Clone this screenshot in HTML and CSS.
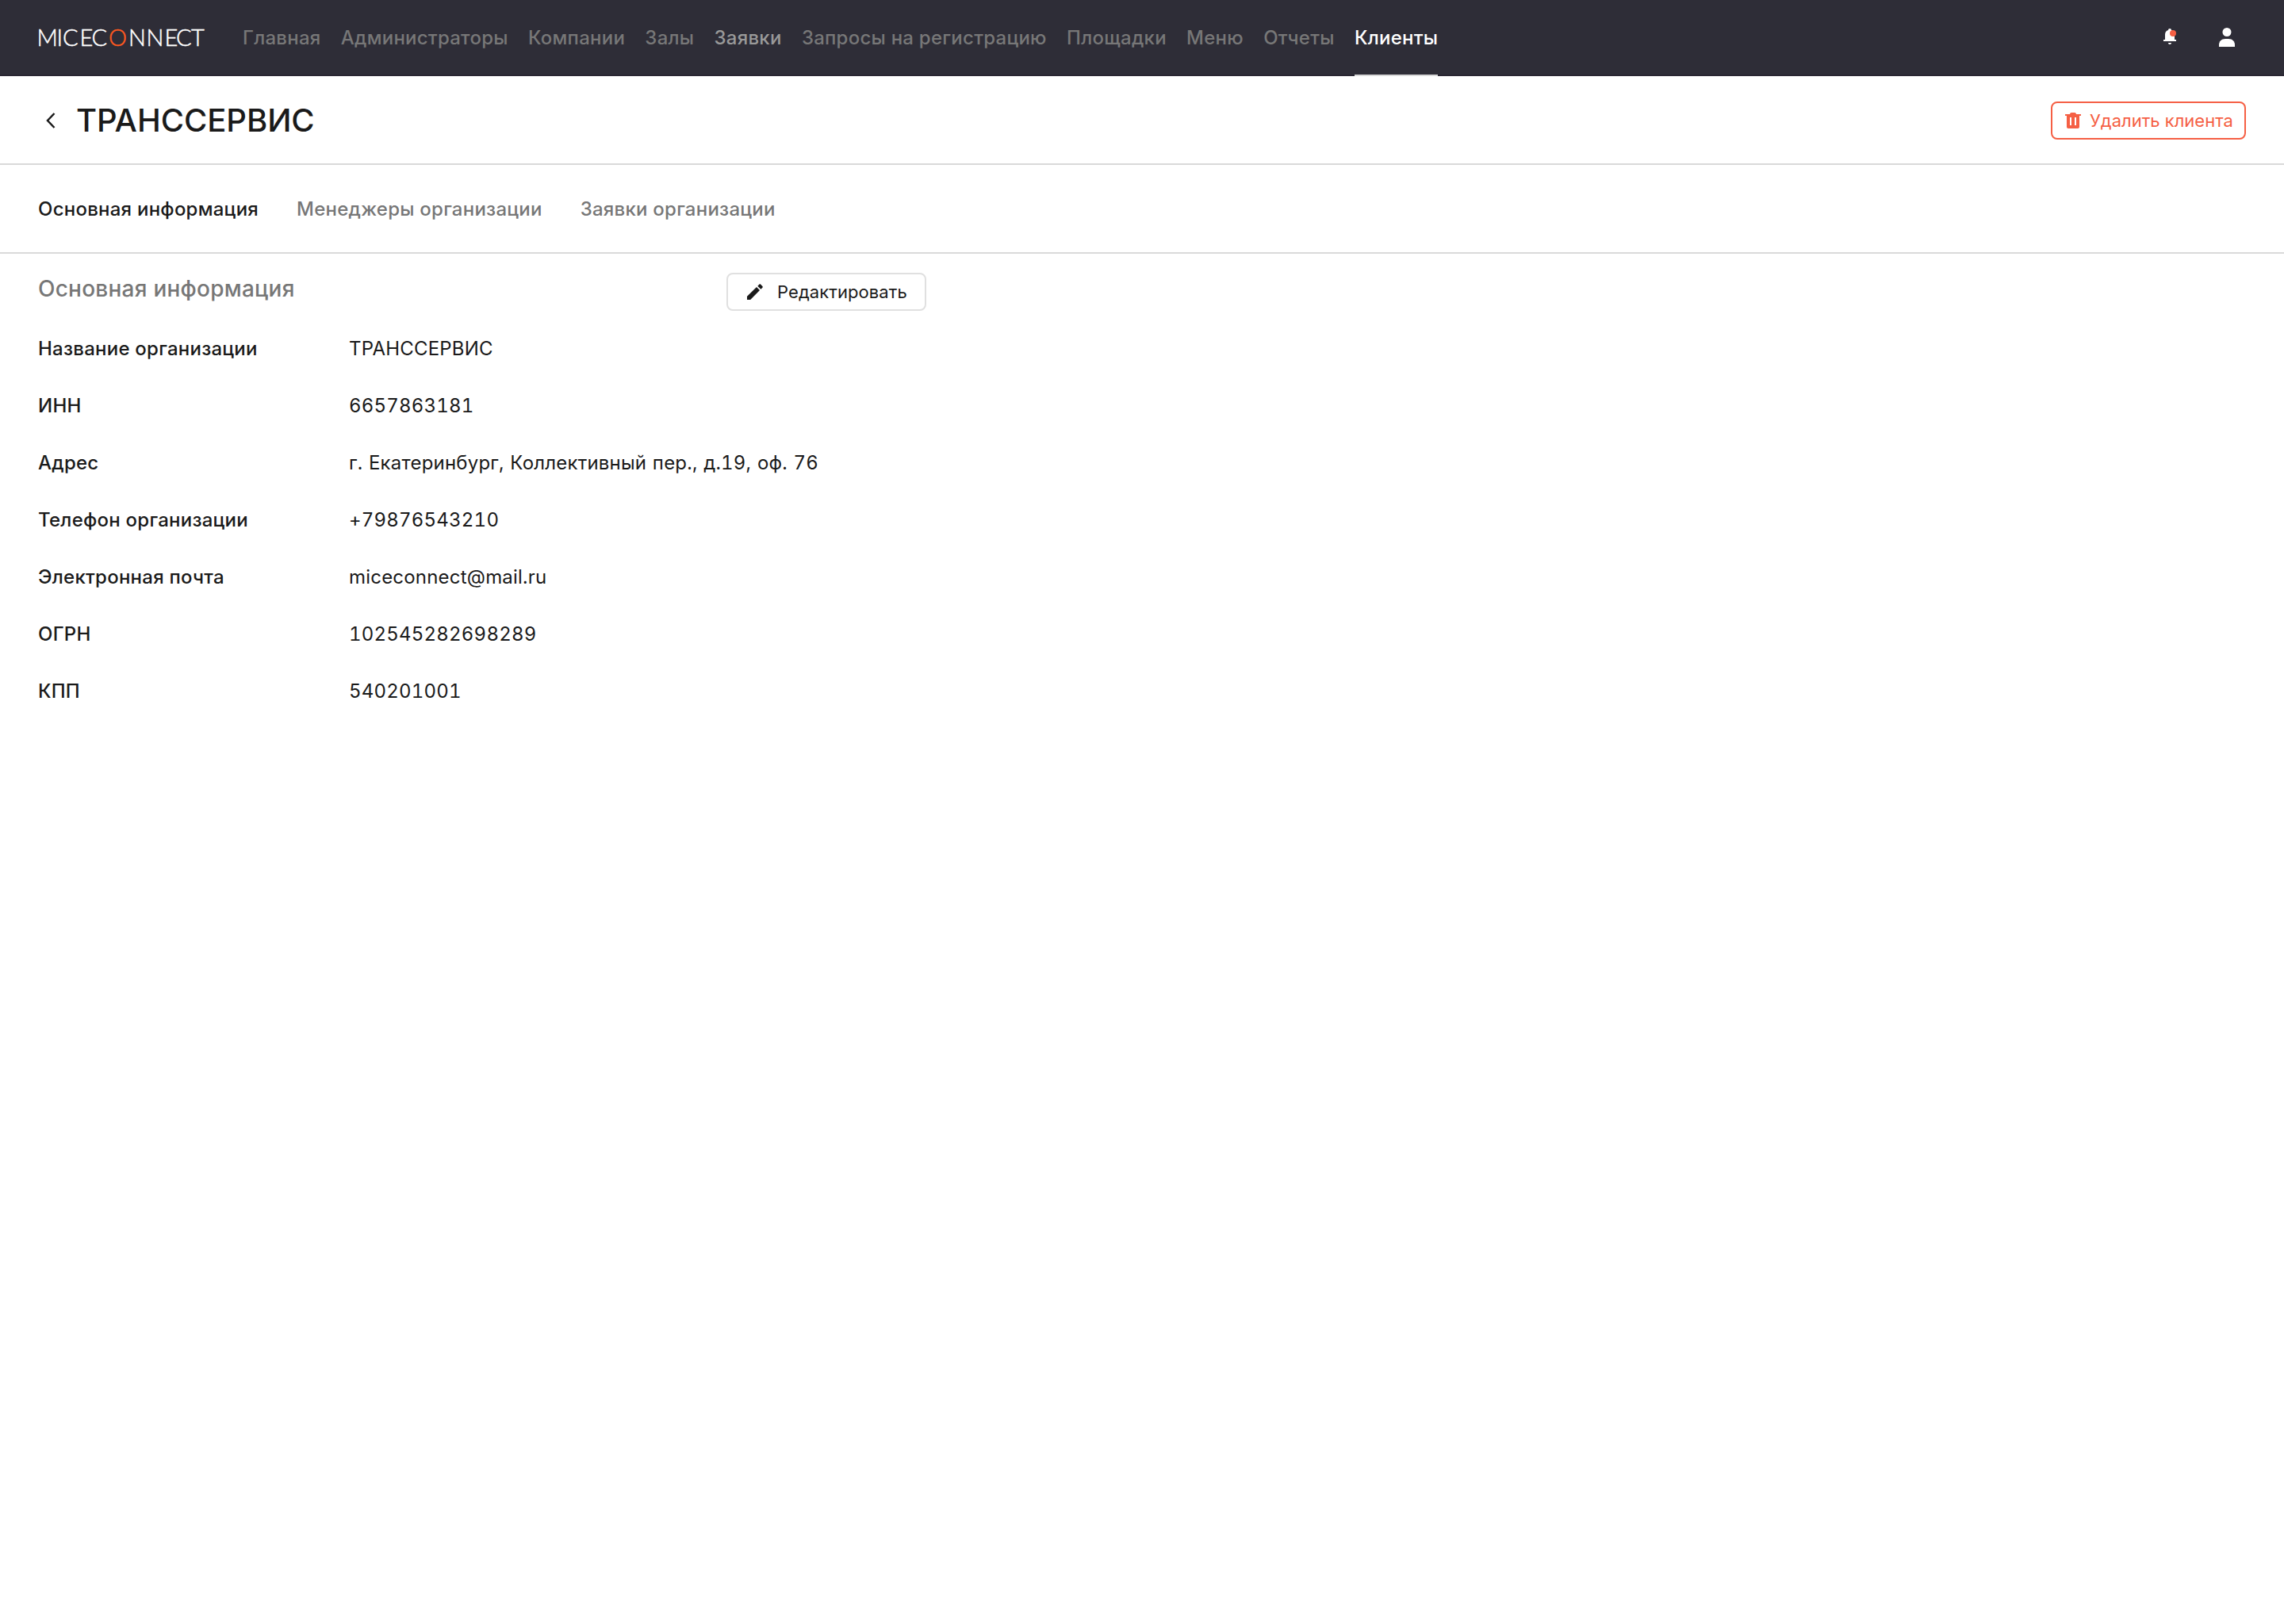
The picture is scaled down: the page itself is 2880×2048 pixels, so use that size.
FILE: index.html
```html
<!DOCTYPE html>
<html lang="ru">
<head>
    <meta charset="UTF-8">
    <meta name="viewport" content="width=device-width, initial-scale=1.0">
    <title>ТРАНССЕРВИС</title>
    <link rel="stylesheet" href="styles.css">
</head>
<body>
    <header class="header">
        <svg class="logo" width="212" height="40" viewBox="0 0 212 40">
            <text x="-1.500 23.500 31 52.500 67.500 89 114 136.500 159.500 174 193" y="31">MICEC<tspan class="logo-accent">O</tspan>NNECT</text>
        </svg>
        <nav class="nav">
            <a class="nav-link">Главная</a>
            <a class="nav-link">Администраторы</a>
            <a class="nav-link">Компании</a>
            <a class="nav-link">Залы</a>
            <a class="nav-link hover">Заявки</a>
            <a class="nav-link">Запросы на регистрацию</a>
            <a class="nav-link">Площадки</a>
            <a class="nav-link">Меню</a>
            <a class="nav-link">Отчеты</a>
            <a class="nav-link active">Клиенты</a>
        </nav>
        <div class="header-icons">
            <svg width="18" height="22" viewBox="0 0 18 22">
                <path fill="#fff" d="M8 0C9.200 0 10 .9 10 2C12.600 2.800 14 5 14 7.600V14H16V16H0V14H2V7.600C2 5 3.400 2.800 6 2C6 .9 6.800 0 8 0ZM6 18H10C10 19.200 9.100 20 8 20C6.900 20 6 19.200 6 18Z"/>
                <circle cx="12" cy="6" r="4" fill="#f55f44"/>
            </svg>
            <svg width="20" height="24" viewBox="0 0 20 24">
                <circle cx="10" cy="5.500" r="5.500" fill="#fff"/>
                <path fill="#fff" d="M0 24V21.500C0 17.500 3 14 8 14H12C17 14 20 17.500 20 21.500V24Z"/>
            </svg>
        </div>
    </header>

    <div class="title-bar">
        <svg width="12" height="20" viewBox="0 0 12 20">
            <path d="M10.500 1L2 10L10.500 19" fill="none" stroke="#1a1a1a" stroke-width="2.500"/>
        </svg>
        <h1 class="title">ТРАНССЕРВИС</h1>
        <button class="btn btn-delete">
            <svg width="20" height="20" viewBox="0 0 20 20">
                <path fill="#f55f44" fill-rule="evenodd" d="M0 2H6C6 .8 7 0 8 0H12C13 0 14 .8 14 2H20V4H18V18C18 19.200 17.200 20 16 20H4C2.800 20 2 19.200 2 18V4H0ZM6 6V16H8V6ZM12 6V16H14V6Z"/>
            </svg>
            <span>Удалить клиента</span>
        </button>
    </div>

    <div class="tabs">
        <a class="tab active">Основная информация</a>
        <a class="tab">Менеджеры организации</a>
        <a class="tab">Заявки организации</a>
    </div>

    <main class="content">
        <div class="content-head">
            <h2 class="subtitle">Основная информация</h2>
            <button class="btn btn-edit">
                <svg width="20" height="20" viewBox="0 0 20 20">
                    <path fill="#1a1a1a" d="M0 15.800L12 4L16 8L4.200 20H0ZM13.300 2.700L15.300 .7C15.900 .1 16.600 .1 17.200 .7L19.400 2.900C20 3.500 20 4.100 19.400 4.700L17.400 6.700Z"/>
                </svg>
                <span>Редактировать</span>
            </button>
        </div>
        <dl class="info">
            <dt>Название организации</dt>
            <dd>ТРАНССЕРВИС</dd>
            <dt>ИНН</dt>
            <dd>6657863181</dd>
            <dt>Адрес</dt>
            <dd>г. Екатеринбург, Коллективный пер., д.19, оф. 76</dd>
            <dt>Телефон организации</dt>
            <dd>+79876543210</dd>
            <dt>Электронная почта</dt>
            <dd>miceconnect@mail.ru</dd>
            <dt>ОГРН</dt>
            <dd>102545282698289</dd>
            <dt>КПП</dt>
            <dd>540201001</dd>
        </dl>
    </main>
</body>
</html>
```
FILE: styles.css
```css
* {
    box-sizing: border-box;
}

body {
    margin: 0;
    font-family: Inter, "Liberation Sans", sans-serif;
    font-size: 24px;
    line-height: 32px;
    letter-spacing: 0.24px;
    color: #1a1a1a;
    background: #fff;
}

.header {
    display: flex;
    align-items: center;
    height: 96px;
    padding: 0 62px 0 48px;
    background: #2e2d37;
    border-bottom: 2px solid #292632;
}

.logo {
    margin-right: 46px;
    font-family: Lato, sans-serif;
    font-size: 29px;
    font-weight: 300;
    fill: #fff;
    stroke: #fff;
    stroke-width: 0.5px;
    letter-spacing: 0;
    overflow: visible;
}

.logo-accent {
    fill: #ff5a1f;
    stroke: #ff5a1f;
}

.nav {
    display: flex;
    gap: 25.3px;
    height: 96px;
}

.nav-link {
    padding-top: 33px;
    height: 97px;
    font-weight: 500;
    color: #777;
}

.nav-link.hover {
    color: #999;
}

.nav-link.active {
    color: #fff;
    border-bottom: 2px solid #d9d9d9;
}

.header-icons {
    display: flex;
    align-items: center;
    gap: 52px;
    margin-left: auto;
}

.title-bar {
    display: flex;
    align-items: center;
    height: 112px;
    padding: 2px 48px 0 58px;
    border-bottom: 2px solid #d9d9d9;
}

.title {
    margin: 0 0 0 26px;
    font-size: 40px;
    font-weight: 500;
    line-height: 48px;
    letter-spacing: -0.05px;
}

.btn {
    display: flex;
    align-items: center;
    justify-content: flex-start;
    height: 48px;
    background: #fff;
    border: 2px solid #e0e0e0;
    border-radius: 8px;
    font-family: inherit;
    font-size: 22px;
    color: #1a1a1a;
    white-space: nowrap;
}

.btn-delete {
    gap: 11px;
    width: 246px;
    margin-left: auto;
    padding: 0 0 0 16px;
    border-color: #f55f44;
    color: #f55f44;
}

.btn-edit {
    gap: 18px;
    width: 252px;
    padding: 0 0 0 24px;
    letter-spacing: 0.08px;
}

.tabs {
    display: flex;
    align-items: center;
    gap: 48px;
    height: 112px;
    padding: 2px 48px 0;
    border-bottom: 2px solid #d9d9d9;
}

.tab {
    font-weight: 500;
    color: #777;
}

.tab.active {
    color: #1a1a1a;
}

.content {
    padding: 24px 48px;
}

.content-head {
    display: flex;
    justify-content: space-between;
    width: 1120px;
}

.subtitle {
    margin: 0;
    font-size: 28px;
    font-weight: 500;
    line-height: 40px;
    color: #777;
}

.info {
    display: grid;
    grid-template-columns: 392px 1fr;
    row-gap: 40px;
    margin: 32px 0 0;
}

.info dt {
    font-weight: 500;
}

.info dd {
    margin: 0;
    font-variant-numeric: tabular-nums;
    letter-spacing: 0.2px;
    word-spacing: 1px;
}
```
